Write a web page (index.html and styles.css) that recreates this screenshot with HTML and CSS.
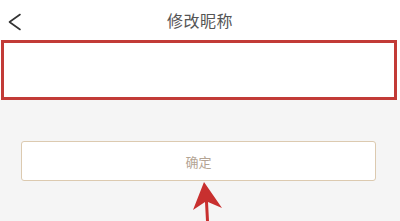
FILE: index.html
```html
<!DOCTYPE html>
<html lang="zh">
<head>
<meta charset="utf-8">
<title>修改昵称</title>
<link rel="stylesheet" href="styles.css">
</head>
<body>
<div class="page">
  <header class="nav">
    <span class="back">
      <svg width="15" height="18" viewBox="0 0 15 18"><path d="M13 1.5 L2.5 9 L13 16.5" fill="none" stroke="#333" stroke-width="1.6" stroke-linecap="round" stroke-linejoin="round"/></svg>
    </span>
    <h1 class="title">修改昵称</h1>
  </header>
  <div class="field">
    <input class="name-input" type="text" value="">
    <div class="highlight"></div>
  </div>
  <div class="actions">
    <button class="confirm">确定</button>
  </div>
  <svg class="arrow" width="40" height="45" viewBox="0 0 40 45">
    <polygon points="14,0 3,28 15,20 16,39 19,39 18,20 32,26" fill="#c8302f"/>
  </svg>
</div>
</body>
</html>
```
FILE: styles.css
```css
html, body {
  margin: 0;
  padding: 0;
  background: #f5f5f5;
}
.page {
  position: relative;
  width: 400px;
  height: 221px;
  overflow: hidden;
  background: #f5f5f5;
  font-family: "Noto Sans CJK SC", "Noto Sans", sans-serif;
}
.nav {
  height: 40px;
  background: #fff;
  display: flex;
  align-items: center;
  justify-content: center;
  position: relative;
}
.back {
  position: absolute;
  left: 7px;
  top: 13px;
  display: flex;
}
.title {
  margin: 0;
  font-size: 16px;
  font-weight: 400;
  color: #555;
  letter-spacing: 0.5px;
}
.field {
  position: relative;
  height: 60px;
  background: #fff;
}
.name-input {
  box-sizing: border-box;
  width: 100%;
  height: 100%;
  border: 0;
  outline: none;
  background: #fff;
  padding: 0 12px;
}
.highlight {
  position: absolute;
  left: 1px;
  top: 0;
  width: 396px;
  height: 60px;
  box-sizing: border-box;
  border: 3px solid #c23b37;
}
.actions {
  padding: 41px 24px 0 21px;
}
.confirm {
  display: block;
  box-sizing: border-box;
  width: 355px;
  height: 40px;
  background: #fff;
  border: 1px solid #dccab0;
  border-radius: 3px;
  color: #b4a494;
  font-family: "Noto Sans CJK SC", "Noto Sans", sans-serif;
  font-size: 13px;
  padding: 0;
}
.arrow {
  position: absolute;
  left: 190px;
  top: 182px;
}
```
